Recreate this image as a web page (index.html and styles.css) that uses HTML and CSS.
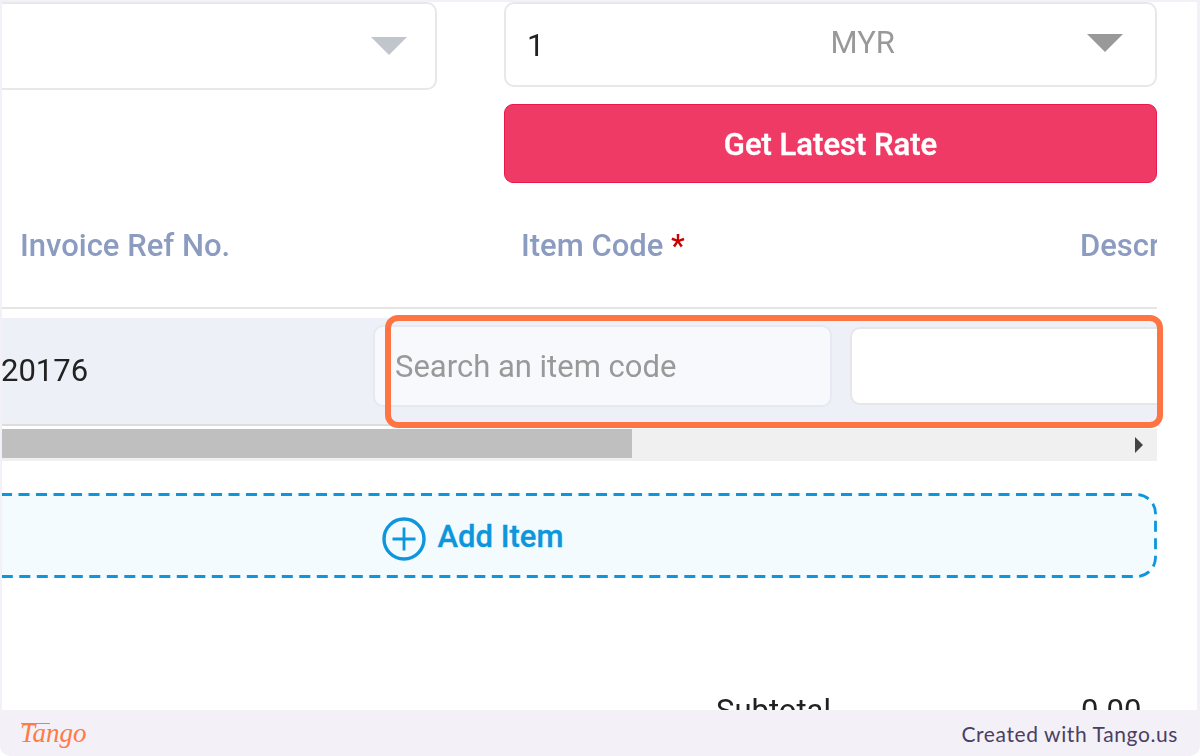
FILE: index.html
```html
<!DOCTYPE HTML>
<html>
  <head>
    <meta http-equiv="content-type" content="text/html; charset=utf-8">
    <title>Invoice item step</title>
    <link rel="stylesheet" href="styles.css">
  </head>
  <body>
    <div id="shot">
      <div class="page">
        <div class="pageInner">
          <div class="topRow">
            <div class="selectBox">
              <span class="arrow arrowLight"></span>
            </div>
            <div class="rateColumn">
              <div class="rateInput">
                <span class="rateValue">1</span>
                <span class="rateCurrency">MYR</span>
                <span class="arrow arrowDark"></span>
              </div>
              <button class="rateButton" type="button">Get Latest Rate</button>
            </div>
          </div>

          <div class="tableHead">
            <div class="headCell refHead">Invoice Ref No.</div>
            <div class="headCell codeHead">Item Code <span class="required">*</span></div>
            <div class="headCell descHead">Description</div>
          </div>

          <div class="tableRow">
            <div class="refCell">20176</div>
            <input class="codeInput" type="text" placeholder="Search an item code">
            <input class="descInput" type="text">
          </div>

          <div class="scrollBar">
            <div class="scrollThumb"></div>
            <span class="scrollArrow"></span>
          </div>

          <div class="addItem">
            <svg class="addOutline" aria-hidden="true"><rect class="addOutlineRect" x="1.5" y="1.5" rx="19" ry="19"></rect></svg>
            <svg class="addIcon" width="44" height="44" viewBox="0 0 44 44" aria-hidden="true">
              <circle cx="22" cy="22" r="20" fill="none" stroke="#0d96dc" stroke-width="3.4"></circle>
              <path d="M22 10.5v23M10.5 22h23" fill="none" stroke="#0d96dc" stroke-width="2.8"></path>
            </svg>
            <span class="addText">Add Item</span>
          </div>

          <div class="totalRow">
            <span class="totalLabel">Subtotal</span>
            <span class="totalValue">0.00</span>
          </div>
        </div>
      </div>

      <div class="footer">
        <span class="tangoLogo">Tango</span>
        <span class="tangoCredit">Created with Tango.us</span>
      </div>

      <div class="highlight"></div>
    </div>
  </body>
</html>
```

FILE: styles.css
```css
html, body {
  margin: 0;
  padding: 0;
}

body {
  background-color: #fff;
  font-family: Roboto, "Liberation Sans", sans-serif;
}

#shot {
  position: relative;
  width: 1200px;
  height: 756px;
  overflow: hidden;
  display: flex;
  flex-direction: column;
  background-color: #f3f1f7;
  border-radius: 0 0 10px 10px;
}

.page {
  flex: 1;
  min-height: 0;
  margin: 2px 3px 0 2px;
  background-color: #fff;
  overflow: hidden;
}

.pageInner {
  width: 1155px;
  filter: blur(0.5px);
}

.topRow {
  display: flex;
  gap: 67px;
}

.selectBox {
  box-sizing: border-box;
  flex: none;
  width: 457px;
  height: 88px;
  margin-left: -22px;
  padding-right: 28px;
  border: 2px solid #e8e8e8;
  border-radius: 10px;
  display: flex;
  align-items: center;
  justify-content: flex-end;
}

.arrow {
  width: 0;
  height: 0;
  border-left: 18px solid transparent;
  border-right: 18px solid transparent;
}

.arrowLight {
  border-top: 18px solid #c1c6cc;
}

.arrowDark {
  border-top: 18px solid #999;
}

.rateColumn {
  flex: 1;
  display: flex;
  flex-direction: column;
  gap: 17px;
}

.rateInput {
  box-sizing: border-box;
  height: 85px;
  padding: 0 32px 4px 21px;
  border: 2px solid #e8e8e8;
  border-radius: 10px;
  display: flex;
  align-items: center;
  justify-content: space-between;
}

.rateValue {
  font-size: 31px;
  color: #222;
  margin-top: 6px;
}

.rateCurrency {
  font-size: 31px;
  color: #999;
  margin-left: 94px;
}

.rateButton {
  height: 79px;
  padding: 2px 0 0;
  border: 1px solid #e8174f;
  border-radius: 9px;
  background-color: #ef3a66;
  color: #fff;
  font-family: Roboto, "Liberation Sans", sans-serif;
  font-size: 31px;
  font-weight: 500;
  -webkit-text-stroke: 0.4px #fff;
}

.tableHead {
  height: 124px;
  border-bottom: 2px solid #e5e5e5;
  display: flex;
  align-items: center;
  overflow: hidden;
  white-space: nowrap;
}

.headCell {
  flex: none;
  font-size: 31px;
  font-weight: 500;
  color: #8c9cc0;
}

.refHead {
  width: 519px;
  padding-left: 18px;
  box-sizing: border-box;
}

.codeHead {
  width: 559px;
}

.required {
  color: #c00;
}

.tableRow {
  height: 106px;
  margin-top: 9px;
  border-bottom: 2px solid #ddd;
  background-color: #edf0f7;
  display: flex;
  align-items: flex-start;
  overflow: hidden;
}

.refCell {
  flex: none;
  width: 371px;
  margin-top: 34px;
  margin-left: -1px;
  padding-right: 1px;
  font-size: 31px;
  color: #222;
}

.codeInput, .descInput {
  box-sizing: border-box;
  flex: none;
  border-radius: 10px;
  outline: none;
  font-family: Roboto, "Liberation Sans", sans-serif;
  font-size: 31px;
}

.codeInput {
  width: 459px;
  height: 82px;
  margin-top: 7px;
  padding: 0 0 0 20px;
  border: 2px solid #e6e9f1;
  background-color: #f7f9fd;
}

.codeInput::placeholder {
  color: #999;
  opacity: 1;
}

.descInput {
  width: 400px;
  height: 78px;
  margin-top: 9px;
  margin-left: 18px;
  border: 2px solid #e6e6e6;
  background-color: #fff;
}

.scrollBar {
  position: relative;
  height: 32px;
  margin-top: 3px;
  background-color: #f0f0f0;
}

.scrollThumb {
  width: 630px;
  height: 29px;
  background-color: #bfbfbf;
}

.scrollArrow {
  position: absolute;
  top: 8px;
  right: 14px;
  width: 0;
  height: 0;
  border-top: 8px solid transparent;
  border-bottom: 8px solid transparent;
  border-left: 8px solid #444;
}

.addItem {
  position: relative;
  height: 85px;
  margin: 32px 0 0 -214px;
  border-radius: 20px;
  background-color: #f4fbff;
  display: flex;
  align-items: center;
  justify-content: center;
  gap: 12px;
}

.addIcon {
  margin-top: 6px;
}

.addOutline {
  position: absolute;
  top: 0;
  left: 0;
  width: 100%;
  height: 100%;
}

.addOutlineRect {
  width: calc(100% - 3px);
  height: calc(100% - 3px);
  fill: none;
  stroke: #0d96dc;
  stroke-width: 2.8;
  stroke-dasharray: 11 6.5;
}

.addText {
  margin-top: 2px;
  font-size: 31px;
  font-weight: 500;
  color: #0d96dc;
  -webkit-text-stroke: 0.3px #0d96dc;
}

.totalRow {
  display: flex;
  margin-top: 114px;
  padding-left: 714px;
  font-size: 31px;
  color: #222;
}

.totalLabel {
  width: 365px;
}

.footer {
  flex: none;
  height: 46px;
  padding: 0 22px 0 20px;
  display: flex;
  align-items: center;
  justify-content: space-between;
}

.tangoLogo {
  position: relative;
  font-family: "Liberation Serif", serif;
  font-style: italic;
  font-size: 27px;
  color: #ff7a45;
}

.tangoLogo::before {
  content: "";
  position: absolute;
  top: 5px;
  left: 1px;
  width: 29px;
  height: 1px;
  background-color: #ff7a45;
}

.tangoCredit {
  font-family: Lato, sans-serif;
  font-size: 21px;
  letter-spacing: 0.6px;
  color: #4a3f63;
}

.highlight {
  position: absolute;
  top: 315px;
  left: 385px;
  box-sizing: border-box;
  width: 778px;
  height: 113px;
  border: 6px solid #ff7443;
  border-radius: 13px;
}
```
